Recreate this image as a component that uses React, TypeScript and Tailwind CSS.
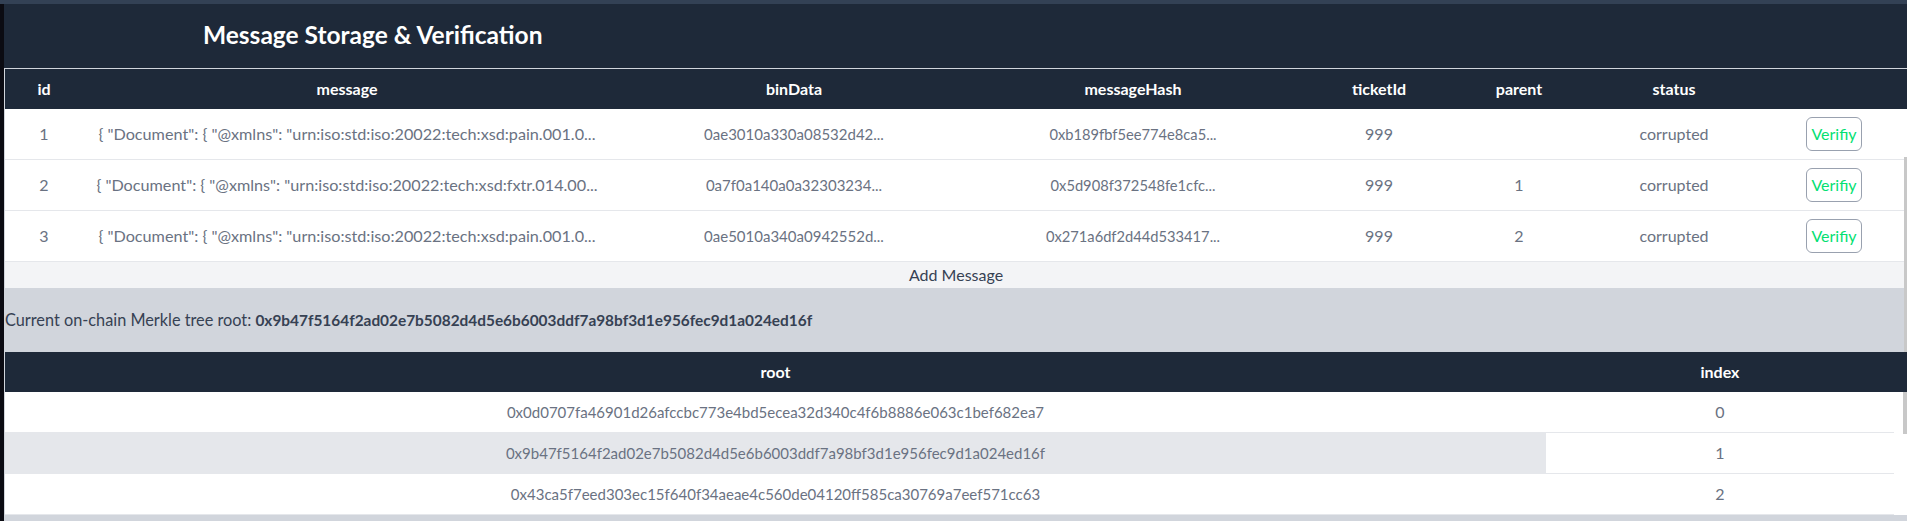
import React from 'react'

const messages = [
  {
    id: 1,
    message: '{ "Document": { "@xmlns": "urn:iso:std:iso:20022:tech:xsd:pain.001.0...',
    binData: '0ae3010a330a08532d42...',
    messageHash: '0xb189fbf5ee774e8ca5...',
    ticketId: 999,
    parent: '',
    status: 'corrupted',
  },
  {
    id: 2,
    message: '{ "Document": { "@xmlns": "urn:iso:std:iso:20022:tech:xsd:fxtr.014.00...',
    binData: '0a7f0a140a0a32303234...',
    messageHash: '0x5d908f372548fe1cfc...',
    ticketId: 999,
    parent: '1',
    status: 'corrupted',
  },
  {
    id: 3,
    message: '{ "Document": { "@xmlns": "urn:iso:std:iso:20022:tech:xsd:pain.001.0...',
    binData: '0ae5010a340a0942552d...',
    messageHash: '0x271a6df2d44d533417...',
    ticketId: 999,
    parent: '2',
    status: 'corrupted',
  },
]

const roots = [
  '0x0d0707fa46901d26afccbc773e4bd5ecea32d340c4f6b8886e063c1bef682ea7',
  '0x9b47f5164f2ad02e7b5082d4d5e6b6003ddf7a98bf3d1e956fec9d1a024ed16f',
  '0x43ca5f7eed303ec15f640f34aeae4c560de04120ff585ca30769a7eef571cc63',
]

const currentRoot = '0x9b47f5164f2ad02e7b5082d4d5e6b6003ddf7a98bf3d1e956fec9d1a024ed16f'

const msgCols = 'grid grid-cols-[78px_528px_366px_312px_180px_100px_210px_110px_1fr]'
const rootCols = 'grid grid-cols-[1541px_348px_1fr]'

export default function App() {
  return (
    <div className="relative flex h-[521px] flex-col overflow-hidden bg-[#0b0b12] font-['Lato',sans-serif]">
      <div className="h-1 shrink-0 bg-[#334155]" />

      <div className="flex flex-1">
        <div className="w-1 shrink-0 bg-[#0b0b12]" />

        <main className="flex-1 bg-gray-300">
          {/* Page title */}
          <header className="flex h-16 items-center bg-gray-800 pb-px pl-[199px]">
            <h1 className="text-[24.5px] font-bold text-white">Message Storage &amp; Verification</h1>
          </header>

          {/* Messages table */}
          <div className="pl-px pt-px">
            <div className={`${msgCols} h-10 items-center bg-gray-800 text-center font-bold text-white`}>
              <div>id</div>
              <div>message</div>
              <div>binData</div>
              <div>messageHash</div>
              <div>ticketId</div>
              <div>parent</div>
              <div>status</div>
              <div />
              <div />
            </div>

            {messages.map(m => (
              <div
                key={m.id}
                className={`${msgCols} h-[51px] items-center border-b border-gray-200 bg-white text-center text-gray-500`}
              >
                <div>{m.id}</div>
                <div className="whitespace-nowrap text-[16.2px]">{m.message}</div>
                <div className="text-[15px]">{m.binData}</div>
                <div className="text-[14.7px]">{m.messageHash}</div>
                <div>{m.ticketId}</div>
                <div>{m.parent}</div>
                <div>{m.status}</div>
                <div className="flex justify-center">
                  <button className="rounded-md border border-gray-400 px-[4px] py-[4px] text-green-400">
                    Verifiy
                  </button>
                </div>
                <div />
              </div>
            ))}

            <button className="flex h-[26px] w-full items-center justify-center bg-gray-100 text-gray-700">
              Add Message
            </button>
          </div>

          {/* Current root */}
          <div className="flex h-16 items-center pl-px text-[16.3px] text-gray-700">
            <span>
              Current on-chain Merkle tree root:{' '}
              <strong className="text-[15.4px] font-bold">{currentRoot}</strong>
            </span>
          </div>

          {/* Roots table */}
          <div className="pl-px">
            <div className={`${rootCols} h-10 items-center bg-gray-800 text-center font-bold text-white`}>
              <div>root</div>
              <div>index</div>
              <div />
            </div>
            <div className={`${rootCols} bg-white text-center text-gray-500`}>
              {roots.map((r, i) => (
                <React.Fragment key={r}>
                  <div
                    className={`flex h-[41px] items-center justify-center border-b border-gray-200 text-[15px] ${
                      i === 1 ? 'bg-gray-200' : ''
                    }`}
                  >
                    {r}
                  </div>
                  <div className="flex h-[41px] items-center justify-center border-b border-gray-200">{i}</div>
                  {i === 0 ? (
                    <div className="row-span-3 flex justify-end">
                      <div className="h-[42px] w-[4px] bg-[#c8c8c8]" />
                    </div>
                  ) : null}
                </React.Fragment>
              ))}
            </div>
          </div>
        </main>
      </div>

      {/* overlay page scrollbar */}
      <div className="absolute right-0 top-[157px] h-[195px] w-[3px] bg-[#c8c8c8]" />
    </div>
  )
}
